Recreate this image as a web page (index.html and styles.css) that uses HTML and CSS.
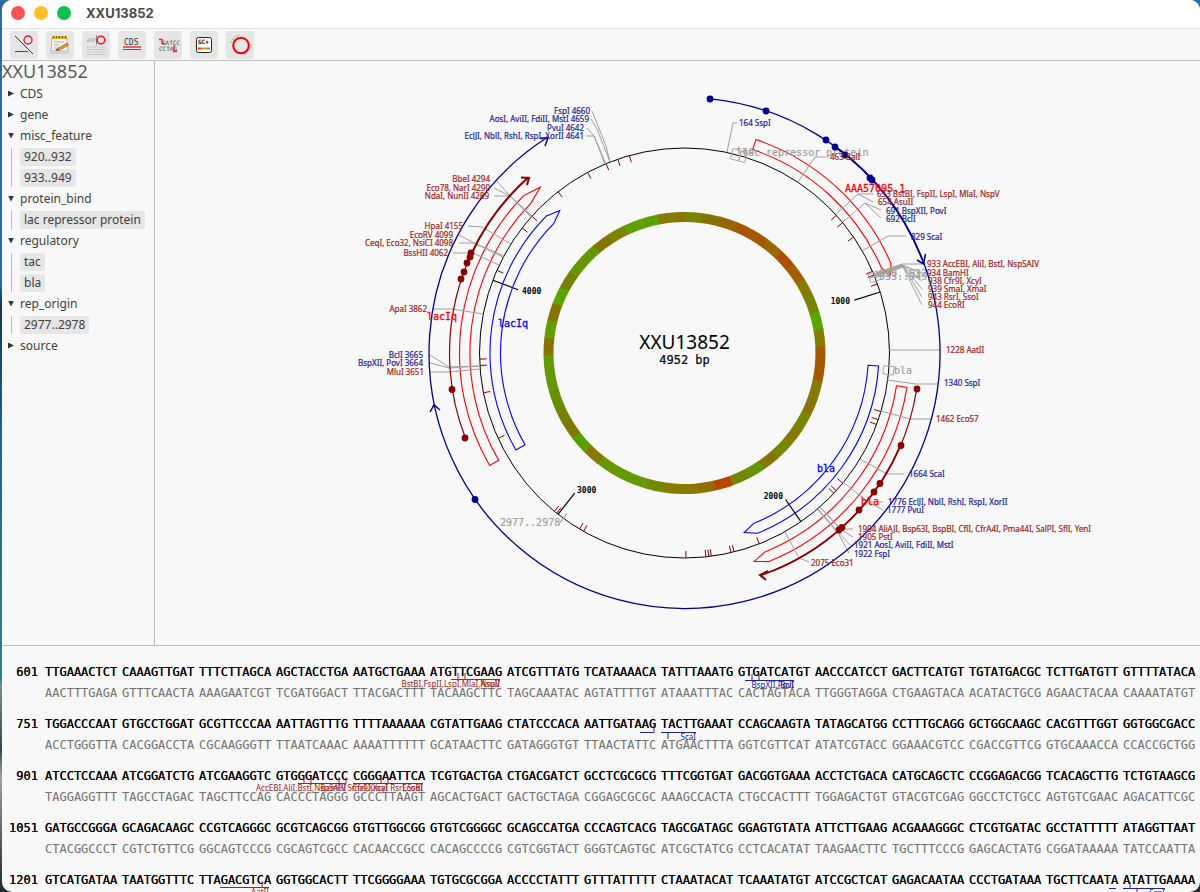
FILE: index.html
```
<!DOCTYPE html>
<html lang="en">
<head>
<meta charset="utf-8">
<title>XXU13852</title>
<link rel="stylesheet" href="styles.css">
</head>
<body>
<div class="window">
  <header class="titlebar">
    <button class="light light-close" aria-label="Close"></button>
    <button class="light light-min" aria-label="Minimise"></button>
    <button class="light light-max" aria-label="Zoom"></button>
    <h1 class="window-title">XXU13852</h1>
  </header>
  <nav class="toolbar" aria-label="Views">
    <button class="tool" aria-label="Toggle map shape"><svg viewBox="0 0 28 28"><path d="M5 5 23 23" stroke="#333" /><path d="M5 20.500h13" stroke="#e02"/><circle cx="18" cy="9" r="4" fill="none" stroke="#e0103c" stroke-width="1.300"/></svg></button>
    <button class="tool" aria-label="Edit description"><svg viewBox="0 0 28 28"><path d="M6 7h15l1 15H5z" fill="#f5f3ec" stroke="#aaa" stroke-width=".8"/><path d="M6 5h15v3H6z" fill="#d6b52c"/><path d="M7 6h1m2 0h1m2 0h1m2 0h1m2 0h1" stroke="#555" stroke-width="2"/><path d="M8 11h10M8 14h5M8 17h10M6 20h14" stroke="#aaa"/><path d="m11 18 10-6 1.500 2-10 5.500z" fill="#e79a2b" stroke="#8a4c12" stroke-width=".6"/><path d="m9.500 19.500 2-2 1 2z" fill="#333"/></svg></button>
    <button class="tool" aria-label="Map and sequence"><svg viewBox="0 0 28 28"><path d="M5 10h8M5 11l3-4M9 8h5" stroke="#aaa"/><path d="M14.500 4v10" stroke="#888"/><circle cx="19" cy="9" r="3.800" fill="none" stroke="#f01020" stroke-width="1.400"/><path d="M5 16h19M5 18.500h19M5 21h19M5 23.500h19" stroke="#c4c4c4" stroke-dasharray="3 .5"/></svg></button>
    <button class="tool" aria-label="Show CDS"><svg viewBox="0 0 28 28"><text x="6" y="14" class="icon-cds">CDS</text><path d="M5 16h18" stroke="#e33" stroke-width="1.400"/><path d="M5 18.500h18" stroke="#555"/></svg></button>
    <button class="tool" aria-label="Show restriction sites"><svg viewBox="0 0 28 28"><text x="8" y="14" class="icon-seq">GATCC</text><text x="5" y="20" class="icon-seq">CCTAG</text><path d="M5 8.500h3v4h2M19 20.500h4M20 14v6" fill="none" stroke="#f02030" stroke-width="1.300"/></svg></button>
    <button class="tool" aria-label="Show GC content"><svg viewBox="0 0 28 28"><defs><linearGradient id="gc"><stop stop-color="#e02010"/><stop offset=".5" stop-color="#e2a020"/><stop offset="1" stop-color="#40b030"/></linearGradient></defs><rect x="6.500" y="6.500" width="15" height="15" rx="2" fill="#fff" stroke="#222"/><text x="8" y="13" class="icon-gc">GC+</text><path d="M8 16.500h12v2H8z" fill="url(#gc)"/></svg></button>
    <button class="tool" aria-label="Circular map"><svg viewBox="0 0 28 28"><circle cx="15" cy="14.500" r="7.800" fill="none" stroke="#f40008" stroke-width="2"/><path d="M5 12a10 10 0 0 1 9-8" fill="none" stroke="#7ddc7d" stroke-width="1.200" stroke-dasharray="2 1"/><path d="M25 13q0 8-7 11" fill="none" stroke="#f88" stroke-dasharray="2 1"/></svg></button>
  </nav>
  <div class="upper">
    <aside class="sidebar">
      <h2 class="side-title">XXU13852</h2>
      <details class="group"><summary>CDS</summary></details>
      <details class="group"><summary>gene</summary></details>
      <details class="group" open><summary>misc_feature</summary><div class="entries"><button>920..932</button><button>933..949</button></div></details>
      <details class="group" open><summary>protein_bind</summary><div class="entries"><button>lac repressor protein</button></div></details>
      <details class="group" open><summary>regulatory</summary><div class="entries"><button>tac</button><button>bla</button></div></details>
      <details class="group" open><summary>rep_origin</summary><div class="entries"><button>2977..2978</button></div></details>
      <details class="group"><summary>source</summary></details>
    </aside>
    <main class="map-pane"><svg id="map" class="map" viewBox="155 61 1045 584" role="img" aria-label="Circular map of XXU13852"></svg></main>
  </div>
  <section id="sequence" class="sequence" aria-label="Sequence"></section>
</div>
<script src="map.js"></script>
</body>
</html>
```
FILE: styles.css
```
* { box-sizing: border-box; }
body {
  margin: 0;
  height: 100vh;
  padding-left: 2px;
  overflow: hidden;
  background: linear-gradient(#2a6ca3 0 12%, #1f6fae 12% 32%, #12395c 34%, #1b6a8c 50%, #2d7f86 76%, #7f8f8a 77%, #39434a 84%, #a0a49c 87%, #20282b 100%);
  font-family: "Noto Sans", sans-serif;
  color: #404040;
}
button { font: inherit; color: inherit; border: 0; padding: 0; }
.window {
  display: flex;
  flex-direction: column;
  height: 100%;
  background: #f8f8f8;
  border-radius: 10px;
  overflow: hidden;
}
.titlebar {
  display: flex;
  align-items: center;
  gap: 9px;
  flex: none;
  height: 28px;
  padding: 0 9px 2px;
  background: #fff;
}
.light { width: 14px; height: 14px; border-radius: 50%; }
.light-close { background: #ff5157; }
.light-min { background: #fdbf2a; }
.light-max { background: #0fbf50; }
.window-title {
  margin: 0 0 0 6px;
  font: 700 13px/26px Inter, sans-serif;
  color: #4a4a4a;
}
.toolbar {
  display: flex;
  gap: 8px;
  flex: none;
  height: 33px;
  padding: 2px 8px;
  border-top: 1px solid #e2e2e2;
  border-bottom: 1px solid #bebebe;
}
.tool { width: 28px; height: 28px; border-radius: 4px; background: #e6e6e6; }
.tool svg { display: block; width: 28px; height: 28px; }
.icon-cds { font: 8px "DejaVu Sans Mono", monospace; fill: #333; }
.icon-seq { font: 6px "DejaVu Sans Mono", monospace; fill: #444; }
.icon-gc { font: 700 6px "DejaVu Sans Mono", monospace; fill: #111; }
.upper { display: flex; flex: 1; min-height: 0; border-bottom: 1px solid #bebebe; }
.sidebar { flex: none; width: 153px; border-right: 1px solid #bebebe; overflow: hidden; }
.side-title { margin: 0 0 2px; font-size: 18px; font-weight: 400; line-height: 20px; color: #5a5a5a; }
.group { font-size: 12px; line-height: 21px; }
.group summary { display: flex; align-items: center; height: 21px; list-style: none; }
.group summary::before {
  content: "";
  width: 6px;
  height: 6px;
  margin: 0 6px;
  background: #333;
  clip-path: polygon(0 0, 100% 50%, 0 100%);
}
.group[open] summary::before { clip-path: polygon(0 0, 100% 0, 50% 100%); }
.entries {
  display: flex;
  flex-direction: column;
  align-items: flex-start;
  gap: 3px;
  margin: 2px 0 1px 9px;
  padding-left: 8px;
  border-left: 1px solid #bebebe;
}
.entries button {
  height: 18px;
  padding: 0 4px;
  border-radius: 2px;
  background: #e6e6e6;
  line-height: 18px;
  white-space: nowrap;
}
.map-pane { flex: 1; min-width: 0; }
.map { display: block; width: 100%; height: 100%; }
.map text { font-size: 8px; }
.map .enzyme { stroke: currentColor; stroke-width: .2px; }
.map .mono { font-family: "DejaVu Sans Mono", monospace; font-size: 10px; }
.map .mono.gray { fill: #a0a0a0; stroke: #a0a0a0; stroke-width: .2px; }
.map .mono.strong { stroke: currentColor; stroke-width: .3px; }
.map .scale { font-size: 8px; font-weight: 700; }
.map .length { font-size: 12px; stroke: #000; stroke-width: .2px; }
.map .name { font-size: 19px; fill: #000; }
.sequence {
  flex: none;
  height: 246px;
  overflow: hidden;
  padding-top: 16px;
  font: 12px/21px "DejaVu Sans Mono", monospace;
}
.seq-row { position: relative; height: 52px; }
.strand {
  display: grid;
  grid-template-columns: 36px repeat(15, 70px);
  column-gap: 7px;
  height: 21px;
  white-space: pre;
}
.strand span:first-child { justify-self: end; }
.forward { color: #000; text-shadow: 0 0 #000; }
.reverse { color: #707070; }
.sites { position: absolute; left: 0; top: 0; width: 100%; height: 52px; overflow: visible; }
.sites text { font: 8px "Noto Sans", sans-serif; }
```
FILE: map.js
```
const LENGTH = 4952, CX = 684.5, CY = 353;
const NAVY = "#00008b", DARK = "#8b0000", TXT_N = "#22229a", TXT_R = "#a02424";
const out = [];
const pt = (r, deg) => {
  const a = deg * Math.PI / 180;
  return (CX + r * Math.sin(a)).toFixed(1) + " " + (CY - r * Math.cos(a)).toFixed(1);
};
const arc = (r, a, b) => `A${r} ${r} 0 ${Math.abs(b - a) > 180 ? 1 : 0} ${b > a ? 1 : 0} ${pt(r, b)}`;
const path = (d, color, w = 1, fill = "none") =>
  out.push(`<path d="${d}" fill="${fill}" stroke="${color}" stroke-width="${w}"/>`);
const text = (x, y, s, color, cls = "", anchor = "start") =>
  out.push(`<text x="${x}" y="${y}" fill="${color}" color="${color}" class="${cls}" text-anchor="${anchor}">${s}</text>`);
const dots = (list, color) => list.forEach(([x, y]) =>
  out.push(`<circle cx="${x}" cy="${y}" r="3.4" fill="${color}"/>`));

/* GC content, one colour per 100 bases */
const gc = ("758700 877400 986600 a65800 a65800 976900 b34c00 a16000 877a00 758700 5aa500 827f00 a65800 a65800 " +
  "877a00 877400 758700 877a00 758700 877400 659500 758700 ba4500 936c00 877a00 877a00 6f8c00 659900 659900 659900 " +
  "877a00 5a9f00 827600 758200 659000 659900 659900 877400 5f9f00 877400 5aa500 758200 659500 659500 877400 " +
  "7b8500 5f9f00 5f9f00 877a00 8a7500").split(" ");
gc.forEach((c, i) => {
  const a = i * 36000 / LENGTH, b = Math.min(360, (i + 1) * 36000 / LENGTH);
  path(`M${pt(136, a)}${arc(136, a, b + 0.2)}`, "#" + c, 10);
});

/* backbone */
out.push(`<circle cx="${CX}" cy="${CY}" r="205" fill="none" stroke="#000"/>`);
[1000, 2000, 3000, 4000].forEach(p => path(`M${pt(178, p * 360 / LENGTH)}L${pt(205, p * 360 / LENGTH)}`, "#000", 1.2));
text(850, 304, "1000", "#000", "mono scale", "end");
text(783, 499, "2000", "#000", "mono scale", "end");
text(577, 493, "3000", "#000", "mono scale");
text(522, 294, "4000", "#000", "mono scale");

/* cut site ticks */
[-15.6, -19, -22.5, -28.2, -38.1, -48.1, -52.4, -66.2, -91.7, -93.5, -101.2, -114.6, -140.6, -141.4, -149.2, -150.5,
  179.6, 174, 173.2, 172.5, 166.9, 166, 158.6, 133.2, 132.2, 129.4, 110.4, 109, 106.6, 70.3, 67.6, 66.5, 55.6, 50.5, 47.8]
  .forEach(a => path(`M${pt(198, a)}L${pt(205, a)}`, DARK));

/* feature arrows: start, shoulder, tip */
const feature = (ri, ro, a, b, t, color) =>
  path(`M${pt(ri, a)}L${pt(ro, a)}${arc(ro, a, b)}L${pt((ri + ro) / 2, t)}L${pt(ri, b)}${arc(ri, b, a)}Z`, color, 1.1);
feature(214.5, 225, 18.5, 66.6, 69.3, "#f00");
feature(214.5, 225, 98.8, 158, 161.5, "#f00");
feature(214.5, 225, 240, 314.4, 319, "#f00");
feature(184, 194.5, 93.8, 158, 161.6, "#00f");
feature(184, 194.5, 240.1, 314.8, 318.8, "#00f");

/* grey boxes on the backbone */
const box = (a, b) => path(`M${pt(199.5, a)}L${pt(210, a)}L${pt(210, b)}L${pt(199.5, b)}Z`, "#a8a8a8");
box(13.3, 15.7); box(15.7, 17.5); box(93.7, 96); box(66.9, 68); box(68, 69.4); box(216.2, 216.3);
text(736, 154, "tac", "#a0a0a0", "mono gray");
text(742, 156, "lac repressor protein", "#a0a0a0", "mono gray");
text(879, 277, "920..932", "#a0a0a0", "mono gray");
text(879, 280, "933..949", "#a0a0a0", "mono gray");
text(894, 374, "bla", "#a0a0a0", "mono gray");
text(500, 526, "2977..2978", "#a0a0a0", "mono gray");

/* leader lines */
["592 111 606 146 610 162", "591 119 597 129 610 162", "587 128 594 136 606 164", "586 136 594 136 605 164",
  "496 180 510 196 532 216", "494 188 510 196 532 217", "494 196 510 196 531 217", "468 226 482 227 511 244",
  "459 235 476 244 503 257", "459 243 474 243 504 256", "453 253 473 253 499 265", "433 309 452 309 483 314",
  "430 355 449 367 480 366", "430 363 449 368 480 366", "430 372 449 372 480 369", "737 123 733 123 727 152",
  "826 157 815 157 798 182", "873 194 858 194 836 214", "873 202 858 194", "881 210 865 203 843 222",
  "881 218 865 203", "906 236 888 236 862 251", "922 264 902 264 873 274", "922 273 902 265 874 274",
  "922 281 903 265 874 275", "922 289 903 266 874 276", "922 297 903 266 874 277", "922 305 903 267 875 278",
  "940 350 889 350", "938 384 916 384 887 380", "931 419 910 419 881 411", "904 474 887 474 860 459",
  "883 502 868 502 843 482", "883 510 868 502", "853 529 841 529 820 507", "853 537 840 529 820 507",
  "850 545 838 532 818 509", "849 553 838 533 817 509", "809 562 799 558 785 532"]
  .forEach(s => path("M" + s, "#a0a0a0"));

/* cut fragments */
path(`M${pt(255.5, 5.8)}${arc(255.5, 5.8, 327.6)}`, NAVY, 1.3);
path(`M${pt(255.5, 36)}${arc(255.5, 36, 69.5)}`, NAVY, 1.8);
dots([[710, 99], [766, 111], [826, 140], [835, 147], [845, 155], [870, 178], [872, 180], [475, 499.5]], NAVY);
path("M917 260 923.5 264 925.5 254M430 412 434 405 440 410M540 138 548 138 545 146", NAVY, 1.5);
path(`M${pt(235, 98.8)}${arc(235, 98.8, 161.2)}`, DARK, 1.2);
path(`M${pt(235, 113)}${arc(235, 113, 161.2)}`, DARK, 1.8);
path(`M${pt(235, 248.8)}${arc(235, 248.8, 318.4)}`, DARK, 1.2);
path(`M${pt(235, 292)}${arc(235, 292, 318.4)}`, DARK, 2);
dots([[465, 438], [452, 389.5], [461, 279], [464, 272], [467, 263], [470, 257], [471, 253],
  [917, 389], [901, 445.5], [880, 483.5], [874, 492], [859, 510], [842, 527.5], [839, 530]], DARK);
path("M521 177.5 529 178 527 185M768 571 760 575 766 580", DARK, 2);

/* names */
const right = [[739, 126, "164 SspI", 0], [830, 160, "463 BalI", 1], [877, 197, "653 BstBI, FspII, LspI, MlaI, NspV", 1],
  [878, 205, "654 AsuII", 1], [886, 214, "691 BspXII, PovI", 0], [886, 222, "692 BclI", 0], [911, 240, "829 ScaI", 0],
  [927, 267, "933 AccEBI, AliI, BstI, NspSAIV", 1], [927, 276, "934 BamHI", 1], [928, 284, "938 Cfr9I, XcyI", 1],
  [928, 292, "939 SmaI, XmaI", 1], [928, 300, "943 RsrI, SsoI", 1], [928, 308, "944 EcoRI", 1], [946, 353, "1228 AatII", 1],
  [944, 386, "1340 SspI", 0], [936, 422, "1462 Eco57", 1], [909, 477, "1664 ScaI", 0],
  [888, 505, "1776 EclJI, NblI, RshI, RspI, XorII", 0], [887, 513, "1777 PvuI", 0],
  [858, 532, "1904 AliAJI, Bsp63I, BspBI, CflI, CfrA4I, Pma44I, SalPI, SflI, YenI", 1], [858, 540, "1905 PstI", 1],
  [854, 548, "1921 AosI, AviII, FdiII, MstI", 0], [854, 557, "1922 FspI", 0], [811, 566, "2075 Eco31", 1]];
const left = [[590, 114, "FspI 4660", 0], [589, 122, "AosI, AviII, FdiII, MstI 4659", 0], [584, 131, "PvuI 4642", 0],
  [584, 139, "EclJI, NblI, RshI, RspI, XorII 4641", 0], [490, 182, "BbeI 4294", 1], [490, 191, "Eco78, NarI 4290", 1],
  [489, 199, "NdaI, NunII 4289", 1], [463, 229, "HpaI 4155", 1], [453, 238, "EcoRV 4099", 1],
  [453, 246, "CeqI, Eco32, NsiCI 4098", 1], [448, 256, "BssHII 4062", 1], [427, 312, "ApaI 3862", 1],
  [423, 358, "BclI 3665", 0], [423, 366, "BspXII, PovI 3664", 0], [424, 375, "MluI 3651", 1]];
right.forEach(([x, y, s, red]) => text(x, y, s, red ? TXT_R : TXT_N, "enzyme"));
left.forEach(([x, y, s, red]) => text(x, y, s, red ? TXT_R : TXT_N, "enzyme", "end"));
text(845, 192, "AAA57095.1", "#f00", "mono strong");
text(427, 320, "lacIq", "#f00", "mono strong");
text(861, 505, "bla", "#f00", "mono strong");
text(498, 327, "lacIq", "#00f", "mono strong");
text(817, 472, "bla", "#00f", "mono strong");
text(684.5, 349, "XXU13852", "#000", "name", "middle");
text(684.5, 364, "4952 bp", "#000", "mono length", "middle");
document.getElementById("map").innerHTML = out.join("");

/* sequence rows; site lines and labels are measured from the row's left edge */
const rows = [
  [601, "TTGAAACTCT CAAAGTTGAT TTTCTTAGCA AGCTACCTGA AATGCTGAAA ATGTTCGAAG ATCGTTTATG TCATAAAACA TATTTAAATG GTGATCATGT AACCCATCCT GACTTCATGT TGTATGACGC TCTTGATGTT GTTTTATACA",
    [["M449 17.5h49M456 11v6M463 11v6", 1], ["M743 18.5h49M750 12v6M757 12v6", 0]],
    [[498, 25, "BstBI,FspII,LspI,MlaI,NspV", 1], [498, 25, "AsuII", 1], [792, 26, "BspXII,PovI", 0], [792, 26, "BclI", 0]]],
  [751, "TGGACCCAAT GTGCCTGGAT GCGTTCCCAA AATTAGTTTG TTTTAAAAAA CGTATTGAAG CTATCCCACA AATTGATAAG TACTTGAAAT CCAGCAAGTA TATAGCATGG CCTTTGCAGG GCTGGCAAGC CACGTTTGGT GGTGGCGACC",
    [["M638 18.5h14v-7M659 18.5h35M666 18v7", 0]], [[694, 26, "ScaI", 0]]],
  [901, "ATCCTCCAAA ATCGGATCTG ATCGAAGGTC GTGGGATCCC CGGGAATTCA TCGTGACTGA CTGACGATCT GCCTCGCGCG TTTCGGTGAT GACGGTGAAA ACCTCTGACA CATGCAGCTC CCGGAGACGG TCACAGCTTG TCTGTAAGCG",
    [["M296 17.5h48v-6M351 17.5h70M302 11v6M309 11v6M337 11v6M379 11v6M386 11v6", 1]],
    [[344, 25, "AccEBI,AliI,BstI,NspSAIV", 1], [344, 25, "BamHI", 1], [386, 25, "Cfr9I,XcyI", 1], [386, 25, "SmaI,XmaI", 1], [421, 25, "RsrI,SsoI", 1], [421, 25, "EcoRI", 1]]],
  [1051, "GATGCCGGGA GCAGACAAGC CCGTCAGGGC GCGTCAGCGG GTGTTGGCGG GTGTCGGGGC GCAGCCATGA CCCAGTCACG TAGCGATAGC GGAGTGTATA ATTCTTGAAG ACGAAAGGGC CTCGTGATAC GCCTATTTTT ATAGGTTAAT", [], []],
  [1201, "GTCATGATAA TAATGGTTTC TTAGACGTCA GGTGGCACTT TTCGGGGAAA TGTGCGCGGA ACCCCTATTT GTTTATTTTT CTAAATACAT TCAAATATGT ATCCGCTCAT GAGACAATAA CCCTGATAAA TGCTTCAATA ATATTGAAAA",
    [["M218 17.5h49M260 11v6", 1], ["M1107 18.5h7M1121 18.5h42M1128 12v6M1135 18v7", 0]],
    [[267, 25, "AatII", 1], [1163, 26, "SspI", 0]]]
];
const pair = { A: "T", T: "A", G: "C", C: "G" };
const spans = s => s.split(" ").map(b => `<span>${b}</span>`).join("");
document.getElementById("sequence").innerHTML = rows.map(([n, s, lines, labels]) =>
  `<div class="seq-row"><div class="strand forward"><span>${n}</span>${spans(s)}</div>` +
  `<div class="strand reverse"><span></span>${spans(s.replace(/[ATGC]/g, c => pair[c]))}</div>` +
  `<svg class="sites">${lines.map(([d, red]) => `<path d="${d}" fill="none" stroke="${red ? TXT_R : TXT_N}"/>`).join("")}` +
  labels.map(([x, y, t, red]) => `<text x="${x}" y="${y}" text-anchor="end" fill="${red ? TXT_R : TXT_N}">${t}</text>`).join("") +
  `</svg></div>`).join("");
```
